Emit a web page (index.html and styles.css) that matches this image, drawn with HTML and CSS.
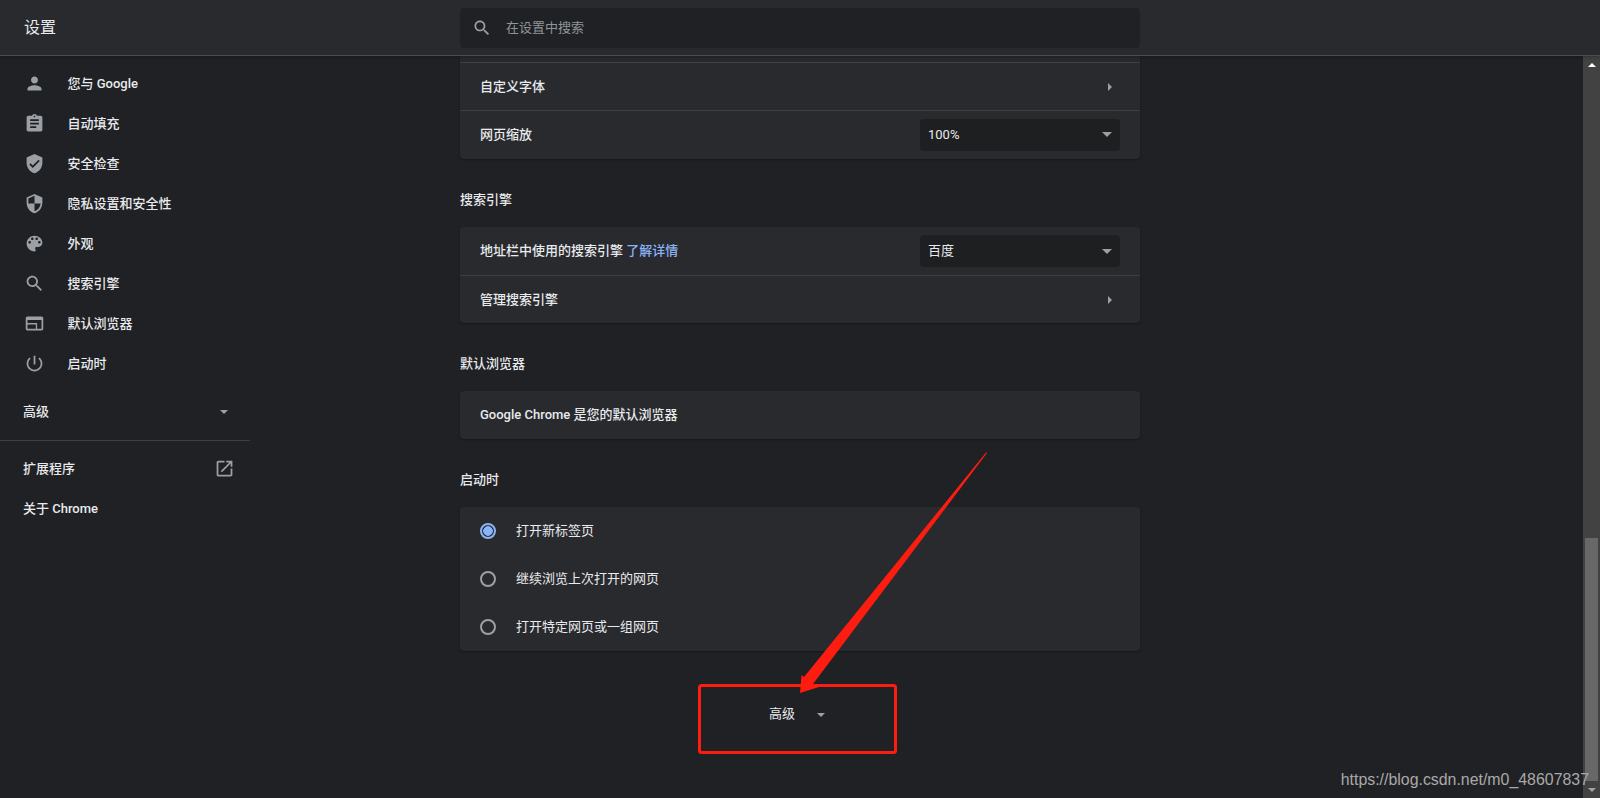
FILE: index.html
```html
<!DOCTYPE html>
<html lang="zh-CN">
<head>
    <meta charset="UTF-8">
    <meta name="viewport" content="width=device-width, initial-scale=1.0"/>
    <title>设置</title>
    <link rel="stylesheet" href="styles.css">
</head>
<body>
<div class="page">
    <header class="topbar">
        <div class="topbar-title">设置</div>
        <div class="search">
            <svg class="icon" viewBox="0 0 24 24"><path d="M15.5 14h-.79l-.28-.27C15.41 12.59 16 11.11 16 9.5 16 5.91 13.09 3 9.5 3S3 5.91 3 9.5 5.91 16 9.5 16c1.61 0 3.09-.59 4.23-1.57l.27.28v.79l5 4.99L20.49 19l-4.99-5zm-6 0C7.01 14 5 11.99 5 9.5S7.01 5 9.5 5 14 7.01 14 9.5 11.99 14 9.5 14z"/></svg>
            <span class="search-hint">在设置中搜索</span>
        </div>
    </header>

    <div class="content">
        <nav class="sidebar">
            <a class="nav-item"><svg class="icon" viewBox="0 0 24 24"><path d="M12 12c2.21 0 4-1.79 4-4s-1.79-4-4-4-4 1.79-4 4 1.79 4 4 4zm0 2c-2.67 0-8 1.34-8 4v2h16v-2c0-2.66-5.33-4-8-4z"/></svg>您与 Google</a>
            <a class="nav-item"><svg class="icon" viewBox="0 0 24 24"><path d="M19 3h-4.18C14.4 1.84 13.3 1 12 1c-1.3 0-2.4.84-2.82 2H5c-1.1 0-2 .9-2 2v14c0 1.1.9 2 2 2h14c1.1 0 2-.9 2-2V5c0-1.1-.9-2-2-2zm-7 0c.55 0 1 .45 1 1s-.45 1-1 1-1-.45-1-1 .45-1 1-1zm2 14H7v-2h7v2zm3-4H7v-2h10v2zm0-4H7V7h10v2z"/></svg>自动填充</a>
            <a class="nav-item"><svg class="icon" viewBox="0 0 24 24"><path d="M12 1L3 5v6c0 5.55 3.84 10.74 9 12 5.16-1.26 9-6.45 9-12V5l-9-4zm-2 16l-4-4 1.41-1.41L10 14.17l6.59-6.59L18 9l-8 8z"/></svg>安全检查</a>
            <a class="nav-item"><svg class="icon" viewBox="0 0 24 24"><path d="M12 1L3 5v6c0 5.55 3.84 10.74 9 12 5.16-1.26 9-6.45 9-12V5l-9-4zm0 10.99h7c-.53 4.12-3.28 7.79-7 8.94V12H5V6.3l7-3.11v8.8z"/></svg>隐私设置和安全性</a>
            <a class="nav-item"><svg class="icon" viewBox="0 0 24 24"><path d="M12 3c-4.97 0-9 4.03-9 9s4.03 9 9 9c.83 0 1.5-.67 1.5-1.5 0-.39-.15-.74-.39-1.01-.23-.26-.38-.61-.38-.99 0-.83.67-1.5 1.5-1.5H16c2.76 0 5-2.24 5-5 0-4.42-4.03-8-9-8zm-5.5 9c-.83 0-1.5-.67-1.5-1.5S5.67 9 6.5 9 8 9.67 8 10.5 7.33 12 6.5 12zm3-4C8.67 8 8 7.33 8 6.5S8.67 5 9.5 5s1.5.67 1.5 1.5S10.33 8 9.5 8zm5 0c-.83 0-1.5-.67-1.5-1.5S13.67 5 14.5 5s1.5.67 1.5 1.5S15.33 8 14.5 8zm3 4c-.83 0-1.5-.67-1.5-1.5S16.67 9 17.5 9s1.5.67 1.5 1.5-.67 1.5-1.5 1.5z"/></svg>外观</a>
            <a class="nav-item"><svg class="icon" viewBox="0 0 24 24"><path d="M15.5 14h-.79l-.28-.27C15.41 12.59 16 11.11 16 9.5 16 5.91 13.09 3 9.5 3S3 5.91 3 9.5 5.91 16 9.5 16c1.61 0 3.09-.59 4.23-1.57l.27.28v.79l5 4.99L20.49 19l-4.99-5zm-6 0C7.01 14 5 11.99 5 9.5S7.01 5 9.5 5 14 7.01 14 9.5 11.99 14 9.5 14z"/></svg>搜索引擎</a>
            <a class="nav-item"><svg class="icon" viewBox="0 0 24 24"><path fill-rule="evenodd" d="M20 4H4c-1.1 0-2 .9-2 2v12c0 1.1.9 2 2 2h16c1.1 0 2-.9 2-2V6c0-1.1-.9-2-2-2zM4 8h16v10h-5v-6.5H4V8zm0 5h9.5v5H4v-5z"/></svg>默认浏览器</a>
            <a class="nav-item"><svg class="icon" viewBox="0 0 24 24"><path d="M13 3h-2v10h2V3zm4.83 2.17l-1.42 1.42C17.99 7.86 19 9.81 19 12c0 3.87-3.13 7-7 7s-7-3.13-7-7c0-2.19 1.01-4.14 2.58-5.42L6.17 5.17C4.23 6.82 3 9.26 3 12c0 4.97 4.03 9 9 9s9-4.03 9-9c0-2.74-1.23-5.18-3.17-6.83z"/></svg>启动时</a>

            <a class="nav-link nav-advanced">高级<span class="arrow-down"></span></a>
            <div class="nav-divider"></div>
            <a class="nav-link nav-extensions">扩展程序<svg class="icon" viewBox="0 0 24 24"><path d="M19 19H5V5h7V3H5c-1.11 0-2 .9-2 2v14c0 1.1.89 2 2 2h14c1.1 0 2-.9 2-2v-7h-2v7zM14 3v2h3.59l-9.83 9.83 1.41 1.41L19 6.41V10h2V3h-7z"/></svg></a>
            <a class="nav-link">关于 Chrome</a>
        </nav>

        <main class="main">
            <section class="card card-top">
                <div class="row">自定义字体<span class="arrow-right"></span></div>
                <div class="row">网页缩放
                    <div class="select">100%<span class="arrow-down arrow-wide"></span></div>
                </div>
            </section>

            <h2 class="section-title">搜索引擎</h2>
            <section class="card">
                <div class="row"><span>地址栏中使用的搜索引擎 <a class="link">了解详情</a></span>
                    <div class="select">百度<span class="arrow-down arrow-wide"></span></div>
                </div>
                <div class="row">管理搜索引擎<span class="arrow-right"></span></div>
            </section>

            <h2 class="section-title">默认浏览器</h2>
            <section class="card">
                <div class="row">Google Chrome 是您的默认浏览器</div>
            </section>

            <h2 class="section-title">启动时</h2>
            <section class="card">
                <div class="radio-row"><span class="radio radio-on"></span>打开新标签页</div>
                <div class="radio-row"><span class="radio"></span>继续浏览上次打开的网页</div>
                <div class="radio-row"><span class="radio"></span>打开特定网页或一组网页</div>
            </section>

            <div class="advanced">高级<span class="advanced-arrow"><span class="arrow-down arrow-low"></span></span></div>
        </main>

        <div class="scrollbar">
            <div class="scroll-btn"><span class="scroll-up"></span></div>
            <div class="scroll-track"><div class="scroll-thumb"></div></div>
            <div class="scroll-btn"><span class="scroll-down"></span></div>
        </div>
    </div>

    <!-- red marks drawn over the screenshot -->
    <svg class="marks" viewBox="0 0 1600 798">
        <rect x="699.5" y="685.5" width="196" height="67" rx="2" fill="none" stroke="#fd1c10" stroke-width="3"/>
        <polygon points="987,453 813,684 819,687 800,693 801.5,675 804,677 986,452.5" fill="#fd1c10"/>
    </svg>
    <div class="watermark">https://blog.csdn.net/m0_48607837</div>
</div>
</body>
</html>
```

FILE: styles.css
```css
* {
    box-sizing: border-box;
}

body {
    margin: 0;
    background: #202124;
    color: #e8eaed;
    font-family: Roboto, "Noto Sans CJK SC", sans-serif;
    font-size: 13px;
    line-height: 20px;
}

.page {
    position: relative;
    display: flex;
    flex-direction: column;
    height: 798px;
    overflow: hidden;
}

.icon {
    display: block;
    flex: none;
    width: 21px;
    height: 21px;
    fill: #9aa0a6;
}

/* top bar */
.topbar {
    position: relative;
    z-index: 1;
    display: flex;
    flex: none;
    align-items: center;
    height: 56px;
    padding-top: 1px;
    background: #292a2d;
    border-bottom: 1px solid #4b4c4f;
    box-shadow: 0 1px 4px rgba(0, 0, 0, 0.3);
}

.topbar-title {
    width: 460px;
    padding-left: 24px;
    font-size: 16px;
}

.search {
    display: flex;
    align-items: center;
    gap: 14px;
    width: 680px;
    height: 40px;
    padding-left: 12px;
    background: #202124;
    border-radius: 4px;
}

.search .icon {
    width: 20px;
    height: 20px;
}

.search-hint {
    color: #8f9499;
}

/* layout */
.content {
    display: flex;
    flex: 1;
    min-height: 0;
}

/* left menu */
.sidebar {
    flex: none;
    width: 250px;
    padding-top: 8px;
    font-weight: 500;
}

.sidebar .icon {
    margin-bottom: 2px;
}

.nav-item {
    display: flex;
    align-items: center;
    gap: 22.5px;
    height: 40px;
    padding-left: 24px;
}

.nav-link {
    display: flex;
    align-items: center;
    justify-content: space-between;
    height: 40px;
    padding-left: 23px;
}

.nav-advanced {
    margin-top: 8px;
    padding-right: 22px;
}

.nav-divider {
    height: 1px;
    margin: 8px 0;
    background: #3f4043;
}

.nav-extensions {
    padding-right: 15px;
}

/* main column */
.main {
    flex: 1;
    padding-left: 210px;
}

.card {
    width: 680px;
    background: #292a2d;
    border-radius: 4px;
    box-shadow: 0 1px 2px rgba(0, 0, 0, 0.35);
}

.card-top {
    padding: 6px 0 1px;
    border-radius: 0 0 4px 4px;
}

.section-title {
    width: 680px;
    height: 68px;
    margin: 0;
    padding-top: 31px;
    font-size: 13px;
    font-weight: 500;
    line-height: 20px;
}

.row {
    display: flex;
    align-items: center;
    justify-content: space-between;
    height: 48px;
    padding: 0 20px;
    border-top: 1px solid #3f4043;
    font-weight: 500;
}

.card > .row:first-child {
    border-top: none;
}

.card-top > .row:first-child {
    border-top: 1px solid #3f4043;
}

.link {
    color: #8ab4f8;
}

.select {
    display: flex;
    align-items: center;
    justify-content: space-between;
    width: 200px;
    height: 32px;
    padding: 0 8px;
    background: #1e1f21;
    border-radius: 4px;
    font-weight: 400;
}

.radio-row {
    display: flex;
    align-items: center;
    gap: 20px;
    height: 48px;
    padding-left: 20px;
}

.radio {
    width: 16px;
    height: 16px;
    border: 2px solid #9aa0a6;
    border-radius: 50%;
}

.radio-on {
    border-color: #8ab4f8;
    background: radial-gradient(circle, #8ab4f8 0 4.5px, transparent 5px);
}

.advanced {
    display: flex;
    align-items: center;
    justify-content: center;
    gap: 14px;
    width: 680px;
    height: 48px;
    margin-top: 39px;
    padding-left: 2px;
}

.advanced-arrow {
    display: flex;
    justify-content: center;
    width: 24px;
}

/* small triangles */
.arrow-down {
    width: 0;
    height: 0;
    border-top: 4px solid #9aa0a6;
    border-left: 4px solid transparent;
    border-right: 4px solid transparent;
}

.arrow-low {
    margin-top: 2px;
}

.arrow-wide {
    border-top-width: 5px;
    border-left-width: 5px;
    border-right-width: 5px;
}

.arrow-right {
    width: 0;
    height: 0;
    margin-right: 8px;
    border-left: 4px solid #9aa0a6;
    border-top: 4px solid transparent;
    border-bottom: 4px solid transparent;
}

/* scrollbar */
.scrollbar {
    display: flex;
    flex: none;
    flex-direction: column;
    width: 17px;
    background: #424242;
}

.scroll-btn {
    display: flex;
    flex: none;
    align-items: center;
    justify-content: center;
    height: 17px;
}

.scroll-up {
    width: 0;
    height: 0;
    border-bottom: 4px solid #fff;
    border-left: 4px solid transparent;
    border-right: 4px solid transparent;
}

.scroll-down {
    width: 0;
    height: 0;
    border-top: 4px solid #a3a3a3;
    border-left: 4px solid transparent;
    border-right: 4px solid transparent;
}

.scroll-track {
    display: flex;
    flex: 1;
    align-items: flex-end;
    justify-content: center;
}

.scroll-thumb {
    width: 13px;
    height: 243px;
    background: #686868;
}

/* overlay */
.marks {
    position: absolute;
    z-index: 2;
    top: 0;
    left: 0;
    width: 1600px;
    height: 798px;
    pointer-events: none;
}

.watermark {
    position: absolute;
    z-index: 2;
    right: 11px;
    bottom: 8px;
    color: #a9a9a9;
    font-family: "Liberation Sans", sans-serif;
    font-size: 15.9px;
    line-height: 20px;
}
```
